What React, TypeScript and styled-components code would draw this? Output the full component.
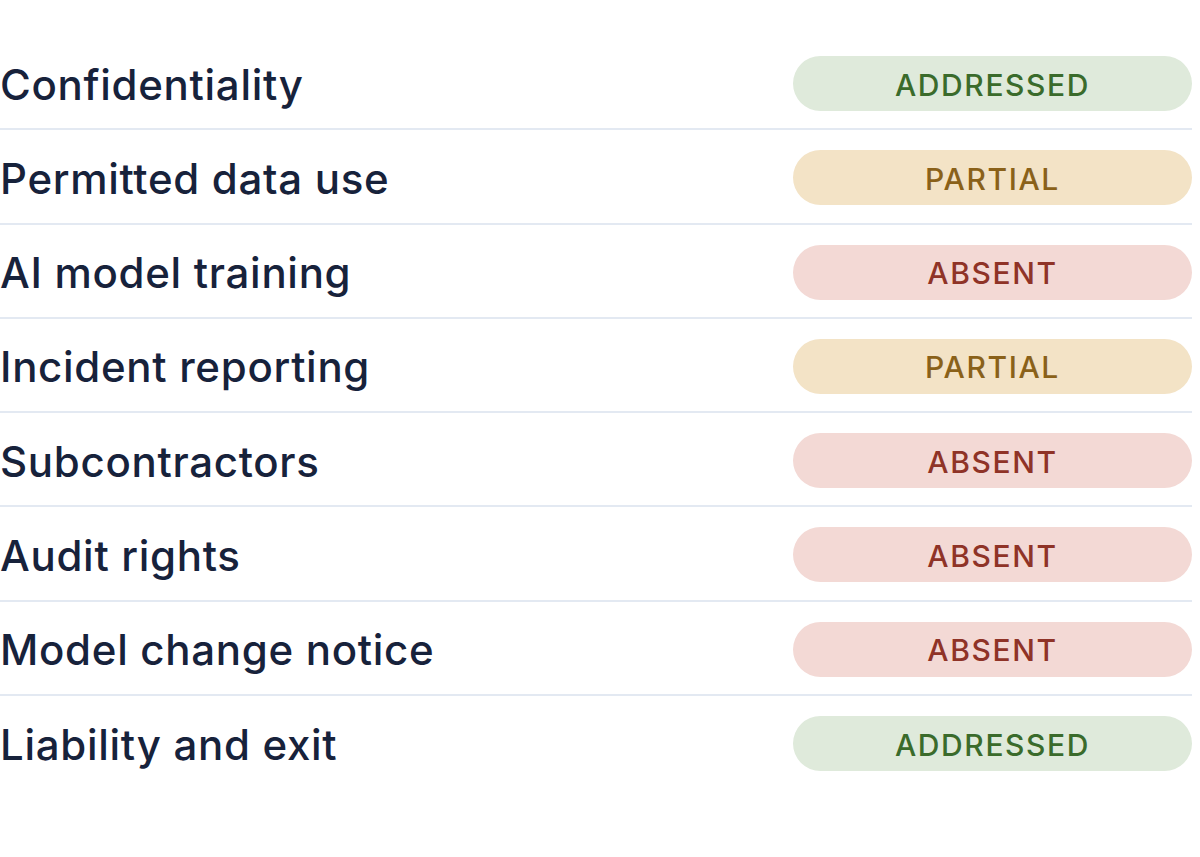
import * as React from "react";
import styled, { createGlobalStyle } from "styled-components";

const GlobalStyle = createGlobalStyle`
	html, body {
		margin: 0;
		padding: 0;
		background: #ffffff;
	}
	body {
		font-family: Inter, "Noto Sans", sans-serif;
	}
`;

const Colors = {
	Text: "#17223b",
	Divider: "#e3e9f2",
};

type Status = "addressed" | "partial" | "absent";

const statusColors: Record<Status, { bg: string; fg: string }> = {
	addressed: { bg: "#dfeadb", fg: "#3a6b2b" },
	partial: { bg: "#f3e3c6", fg: "#8a6119" },
	absent: { bg: "#f3d9d5", fg: "#8f3327" },
};

const List = styled.div`
	width: 1192px;
	padding-top: 36px;
	display: flex;
	flex-direction: column;
`;

const Row = styled.div`
	display: flex;
	align-items: center;
	justify-content: space-between;
	padding: 20px 0 17.3px;
	border-bottom: 2px solid ${Colors.Divider};

	&:last-child {
		border-bottom: none;
	}
`;

const Label = styled.div`
	font-family: Inter, "Noto Sans", sans-serif;
	font-size: 42px;
	font-weight: 500;
	color: ${Colors.Text};
	letter-spacing: 0.7px;
	line-height: 1;
	padding-top: 2px;
`;

const Badge = styled.div<{ $status: Status }>`
	width: 399px;
	height: 55px;
	border-radius: 28px;
	display: flex;
	align-items: center;
	justify-content: center;
	background: ${(p) => statusColors[p.$status].bg};
	color: ${(p) => statusColors[p.$status].fg};
	font-family: Inter, "Noto Sans", sans-serif;
	font-size: 30px;
	font-weight: 500;
	letter-spacing: 1.6px;
	text-transform: uppercase;
	padding-top: 2px;
	box-sizing: border-box;
`;

const items: { label: string; status: Status }[] = [
	{ label: "Confidentiality", status: "addressed" },
	{ label: "Permitted data use", status: "partial" },
	{ label: "AI model training", status: "absent" },
	{ label: "Incident reporting", status: "partial" },
	{ label: "Subcontractors", status: "absent" },
	{ label: "Audit rights", status: "absent" },
	{ label: "Model change notice", status: "absent" },
	{ label: "Liability and exit", status: "addressed" },
];

export default function App() {
	return (
		<>
			<GlobalStyle />
			<List>
				{items.map((item) => (
					<Row key={item.label}>
						<Label>{item.label}</Label>
						<Badge $status={item.status}>{item.status}</Badge>
					</Row>
				))}
			</List>
		</>
	);
}
